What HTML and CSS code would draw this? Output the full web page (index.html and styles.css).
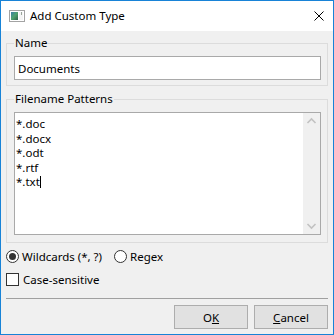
FILE: index.html
```html
<!DOCTYPE html>
<html lang="en">
<head>
    <meta charset="UTF-8">
    <meta name="viewport" content="width=device-width, initial-scale=1.0">
    <title>Add Custom Type</title>
    <link rel="stylesheet" href="styles.css">
</head>
<body>
    <div class="window">
        <div class="titlebar">
            <svg class="app-icon" width="16" height="16" viewBox="0 0 16 16">
                <defs>
                    <linearGradient id="pic" x1="0" y1="0" x2="1" y2="1">
                        <stop offset="0" stop-color="#3d7fa8"/>
                        <stop offset="0.5" stop-color="#4fa36e"/>
                        <stop offset="1" stop-color="#2f5f4a"/>
                    </linearGradient>
                </defs>
                <rect x="0.5" y="2.5" width="15" height="11" fill="#fff" stroke="#a3a3a3"/>
                <rect x="2" y="4" width="7" height="8" fill="url(#pic)"/>
                <rect x="10" y="4" width="4" height="8" fill="#f4f4f4"/>
                <line x1="12.5" y1="4" x2="12.5" y2="7" stroke="#9aa59a"/>
            </svg>
            <span class="title">Add Custom Type</span>
            <svg class="close" width="10" height="10" viewBox="0 0 10 10">
                <path d="M0.5 0.5 L9.5 9.5 M9.5 0.5 L0.5 9.5" stroke="#000" stroke-width="1"/>
            </svg>
        </div>

        <div class="content">
            <fieldset class="group">
                <legend>Name</legend>
                <div class="textbox">Documents</div>
            </fieldset>

            <fieldset class="group patterns">
                <legend>Filename Patterns</legend>
                <div class="memo">
                    <div class="memo-text">
                        <div>*.doc</div>
                        <div>*.docx</div>
                        <div>*.odt</div>
                        <div>*.rtf</div>
                        <div>*.txt<span class="caret"></span></div>
                    </div>
                    <div class="scrollbar">
                        <svg width="17" height="17" viewBox="0 0 17 17">
                            <path d="M4.5 10 L8.5 6 L12.5 10" fill="none" stroke="#c2c2c2" stroke-width="1.6"/>
                        </svg>
                        <svg width="17" height="17" viewBox="0 0 17 17">
                            <path d="M4.5 7 L8.5 11 L12.5 7" fill="none" stroke="#c2c2c2" stroke-width="1.6"/>
                        </svg>
                    </div>
                </div>
            </fieldset>

            <div class="option-row">
                <label class="option"><span class="radio checked"></span>Wildcards (*, ?)</label>
                <label class="option"><span class="radio"></span>Regex</label>
            </div>
            <label class="option check-row"><span class="checkbox"></span>Case-sensitive</label>

            <div class="separator"></div>

            <div class="buttons">
                <button>O<u>K</u></button>
                <button><u>C</u>ancel</button>
            </div>
        </div>
    </div>
</body>
</html>
```

FILE: styles.css
```css
* {
    margin: 0;
    padding: 0;
    box-sizing: border-box;
}

body {
    font-family: 'Noto Sans', 'Open Sans', sans-serif;
    font-size: 11.5px;
    color: #000;
    background: #fff;
}

.window {
    width: 334px;
    height: 335px;
    border: 1px solid #1883d7;
    background: #f0f0f0;
    display: flex;
    flex-direction: column;
}

.titlebar {
    height: 30px;
    background: #fff;
    display: flex;
    align-items: center;
    padding: 0 9px 0 8px;
}

.app-icon {
    margin-right: 5px;
}

.title {
    flex: 1;
    line-height: 16px;
}

.close {
    margin-bottom: 1px;
}

.content {
    flex: 1;
    padding: 4px 5px 5px;
    display: flex;
    flex-direction: column;
}

.group {
    border: 1px solid #dcdcdc;
    padding: 5px 6px 5px 7px;
    min-width: 0;
}

.group legend {
    padding: 0 1px;
    line-height: 16px;
}

.patterns {
    margin-top: 5px;
    padding-bottom: 7px;
}

.textbox {
    height: 24px;
    border: 1px solid #a9a9a9;
    background: #fff;
    padding-left: 3px;
    display: flex;
    align-items: center;
}

.memo {
    height: 123px;
    border: 1px solid #a9a9a9;
    background: #fff;
    display: flex;
}

.memo-text {
    flex: 1;
    padding: 4px 0 0 1px;
    line-height: 14.5px;
}

.caret {
    display: inline-block;
    width: 1px;
    height: 12px;
    background: #000;
    vertical-align: -2px;
}

.scrollbar {
    width: 17px;
    background: #f0f0f0;
    display: flex;
    flex-direction: column;
    justify-content: space-between;
}

.option-row {
    display: flex;
    gap: 12px;
    margin-top: 5px;
}

.option {
    display: flex;
    align-items: center;
    gap: 3px;
    height: 17px;
}

.check-row {
    margin-top: 6px;
    gap: 4px;
}

.radio {
    width: 13px;
    height: 13px;
    border: 1px solid #333;
    border-radius: 50%;
    background: #fff;
    display: flex;
    align-items: center;
    justify-content: center;
}

.radio.checked::after {
    content: '';
    width: 7px;
    height: 7px;
    border-radius: 50%;
    background: #333;
}

.checkbox {
    width: 13px;
    height: 13px;
    border: 1px solid #333;
    background: #fff;
}

.separator {
    height: 1px;
    background: #a0a0a0;
    margin: 10px 0 0;
}

.buttons {
    display: flex;
    justify-content: flex-end;
    gap: 6px;
    margin-top: 6px;
}

.buttons button {
    width: 74px;
    height: 24px;
    border: 1px solid #adadad;
    background: #e1e1e1;
    font-family: inherit;
    font-size: 11.5px;
    color: #000;
}
```
